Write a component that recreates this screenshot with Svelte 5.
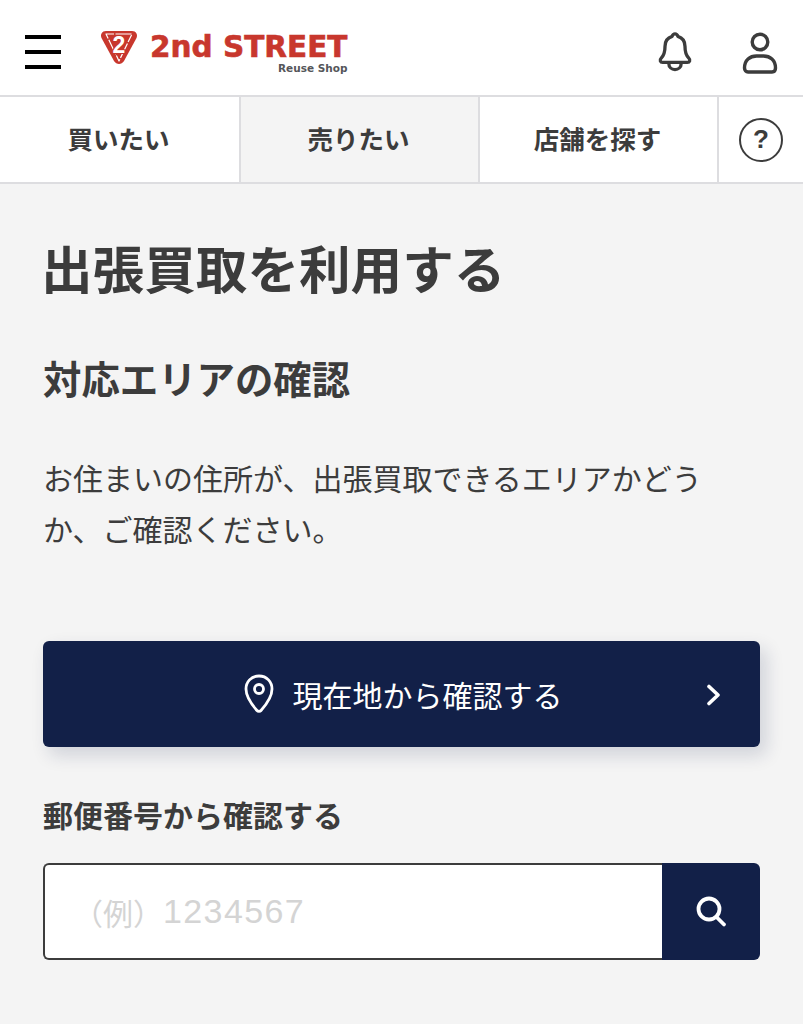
<script>
  const tabs = [
    { label: '買いたい' },
    { label: '売りたい', active: true },
    { label: '店舗を探す' }
  ];
</script>

<div class="page">
  <header class="top">
    <button class="burger" aria-label="メニュー"><span></span><span></span><span></span></button>
    <div class="logo">
      <svg class="mark" width="38" height="36" viewBox="0 0 38 36">
        <path d="M6 1h26c4 0 6 3.500 4.500 7L24 31c-2.500 4-7.500 4-10 0L1.500 8C0 4.500 2 1 6 1z" fill="#c8372d" />
        <path d="M6 4h26L19 31z" fill="none" stroke="#fff" stroke-width="1.200" stroke-linejoin="round" stroke-dasharray="8 1.500 16 1.500" />
        <text x="19" y="22.500" class="mark-num">2</text>
      </svg>
      <div class="wordmark">
        <div class="brand">2nd STREET</div>
        <div class="sub">Reuse Shop</div>
      </div>
    </div>
    <div class="top-icons">
      <svg width="38" height="42" viewBox="0 0 40 44" fill="none" stroke="#3c3c3c" stroke-width="3.500" stroke-linejoin="round" stroke-linecap="round">
        <path d="M20 3c1.500 0 2.500 1 3 2.500 5 1.500 7.500 5.500 7.500 10.500 0 6 1 9.500 4 12.500 2 2 1 4.500-1.500 4.500H7c-2.500 0-3.500-2.500-1.500-4.500 3-3 4-6.500 4-12.500 0-5 2.500-9 7.500-10.500C17.500 4 18.500 3 20 3z" />
        <path d="M13.500 34c0 4 3 6.500 6.500 6.500s6.500-2.500 6.500-6.500" />
      </svg>
      <svg class="user" width="36" height="42" viewBox="0 0 36 42" fill="none" stroke="#3c3c3c" stroke-width="3.400" stroke-linejoin="round">
        <circle cx="18" cy="10" r="7.800" />
        <path d="M2.500 36c0-8 5.500-12 12-12h7c6.500 0 12 4 12 12 0 2.500-1.500 4-3.500 4H6c-2 0-3.500-1.500-3.500-4z" />
      </svg>
    </div>
  </header>

  <nav class="tabs">
    {#each tabs as t}
      <div class="tab" class:active={t.active}>{t.label}</div>
    {/each}
    <div class="tab help"><span class="q">?</span></div>
  </nav>

  <main>
    <h1>出張買取を利用する</h1>
    <h2>対応エリアの確認</h2>
    <p>お住まいの住所が、出張買取できるエリアかどうか、ご確認ください。</p>

    <button class="locate">
      <svg class="pin" width="32" height="40" viewBox="0 0 32 40" fill="none" stroke="#fff" stroke-width="2.800" stroke-linejoin="round">
        <path d="M16 2C8 2 3 8 3 15c0 8 7 17 11 21.500 1 1.200 3 1.200 4 0C22 32 29 23 29 15 29 8 24 2 16 2z" />
        <circle cx="16" cy="15" r="4.500" />
      </svg>
      <span>現在地から確認する</span>
      <svg class="chev" width="16" height="22" viewBox="0 0 16 22" fill="none" stroke="#fff" stroke-width="3.600" stroke-linecap="round" stroke-linejoin="round">
        <path d="M3 2.500 12 11 3 19.500" />
      </svg>
    </button>

    <h3>郵便番号から確認する</h3>
    <div class="search">
      <div class="field"><span class="eg">（例）</span>1234567</div>
      <button class="go" aria-label="検索">
        <svg width="32" height="34" viewBox="0 0 32 34" fill="none" stroke="#fff" stroke-width="3.800" stroke-linecap="round">
          <circle cx="14" cy="14" r="10.500" />
          <path d="M22 22.500l7 7" />
        </svg>
      </button>
    </div>
  </main>
</div>

<style>
  :global(body) {
    margin: 0;
    background: #f4f4f4;
  }
  .page {
    height: 1024px;
    overflow: hidden;
    color: #3c3c3c;
    font-family: "Noto Sans CJK JP", "Noto Sans", sans-serif;
  }
  button {
    border: 0;
    padding: 0;
    font: inherit;
    background: none;
  }

  .top {
    height: 95px;
    box-sizing: border-box;
    background: #fff;
    display: flex;
    align-items: center;
    padding: 9px 25px 0 25px;
  }
  .burger {
    width: 36px;
    height: 34px;
    display: flex;
    flex-direction: column;
    justify-content: space-between;
    margin-right: 39px;
  }
  .burger span {
    height: 4px;
    background: #000;
  }
  .logo {
    display: flex;
    gap: 12px;
    align-items: flex-start;
    height: 44px;
  }
  .mark {
    display: block;
  }
  .mark-num {
    font: 700 23px "Liberation Sans", sans-serif;
    fill: #fff;
    stroke: #c8372d;
    stroke-width: 2px;
    paint-order: stroke;
    text-anchor: middle;
  }
  .wordmark {
    display: flex;
    flex-direction: column;
    align-items: flex-end;
    padding-top: 2px;
  }
  .brand {
    font: 700 29.500px/30px "DejaVu Sans", sans-serif;
    color: #c8372d;
    -webkit-text-stroke: 0.6px #c8372d;
    white-space: nowrap;
  }
  .sub {
    font: 700 10.500px/12px "DejaVu Sans", sans-serif;
    color: #55565a;
  }
  .top-icons {
    margin-left: auto;
    display: flex;
    align-items: center;
    gap: 48px;
  }
  .user {
    margin-top: 2px;
  }

  .tabs {
    display: grid;
    grid-template-columns: 241px 239px 239px 1fr;
    height: 89px;
    box-sizing: border-box;
    border-top: 2px solid #dddde0;
    border-bottom: 2px solid #dddde0;
    background: #fff;
  }
  .tab {
    display: flex;
    align-items: center;
    justify-content: center;
    font-size: 25.500px;
    font-weight: 700;
    padding: 0 2px 4px 0;
    border-right: 2px solid #dddde0;
    box-sizing: border-box;
  }
  .tab.active {
    background: #f4f4f4;
  }
  .help {
    border-right: 0;
    padding: 0;
  }
  .q {
    width: 40px;
    height: 40px;
    border: 2px solid #3c3c3c;
    border-radius: 50%;
    display: flex;
    align-items: center;
    justify-content: center;
    font: 700 26px "Liberation Sans", sans-serif;
  }

  main {
    padding: 0 43px;
  }
  h1 {
    margin: 0 0 0 -2px;
    padding-top: 49px;
    font-size: 51.600px;
    line-height: 68px;
    font-weight: 700;
  }
  h2 {
    margin: 50px 0 0;
    font-size: 38.400px;
    line-height: 52px;
    font-weight: 700;
  }
  p {
    margin: 49px 0 0;
    font-size: 30px;
    line-height: 51px;
  }
  .locate {
    position: relative;
    margin-top: 87px;
    width: 100%;
    height: 106px;
    background: #122048;
    border-radius: 6px;
    color: #fff;
    font-size: 30px;
    display: flex;
    align-items: center;
    justify-content: center;
    gap: 18px;
    box-shadow: 6px 8px 18px rgba(18, 32, 72, 0.16);
  }
  .pin {
    margin-left: 2px;
  }
  .chev {
    position: absolute;
    right: 38px;
    top: 43px;
  }
  h3 {
    margin: 42px 0 0;
    font-size: 30px;
    line-height: 50px;
    font-weight: 700;
  }
  .search {
    margin-top: 24px;
    height: 97px;
    display: flex;
  }
  .field {
    flex: 1;
    background: #fff;
    border: 2px solid #3c3c3c;
    border-right: 0;
    border-radius: 6px 0 0 6px;
    display: flex;
    align-items: center;
    padding-left: 28px;
    font: 34px "Liberation Sans", sans-serif;
    letter-spacing: 1.400px;
    color: #d4d4d4;
  }
  .eg {
    font: 30px "Noto Sans CJK JP", sans-serif;
    letter-spacing: 0;
  }
  .go {
    width: 98px;
    background: #122048;
    border-radius: 0 6px 6px 0;
    display: flex;
    align-items: center;
    justify-content: center;
  }
</style>
